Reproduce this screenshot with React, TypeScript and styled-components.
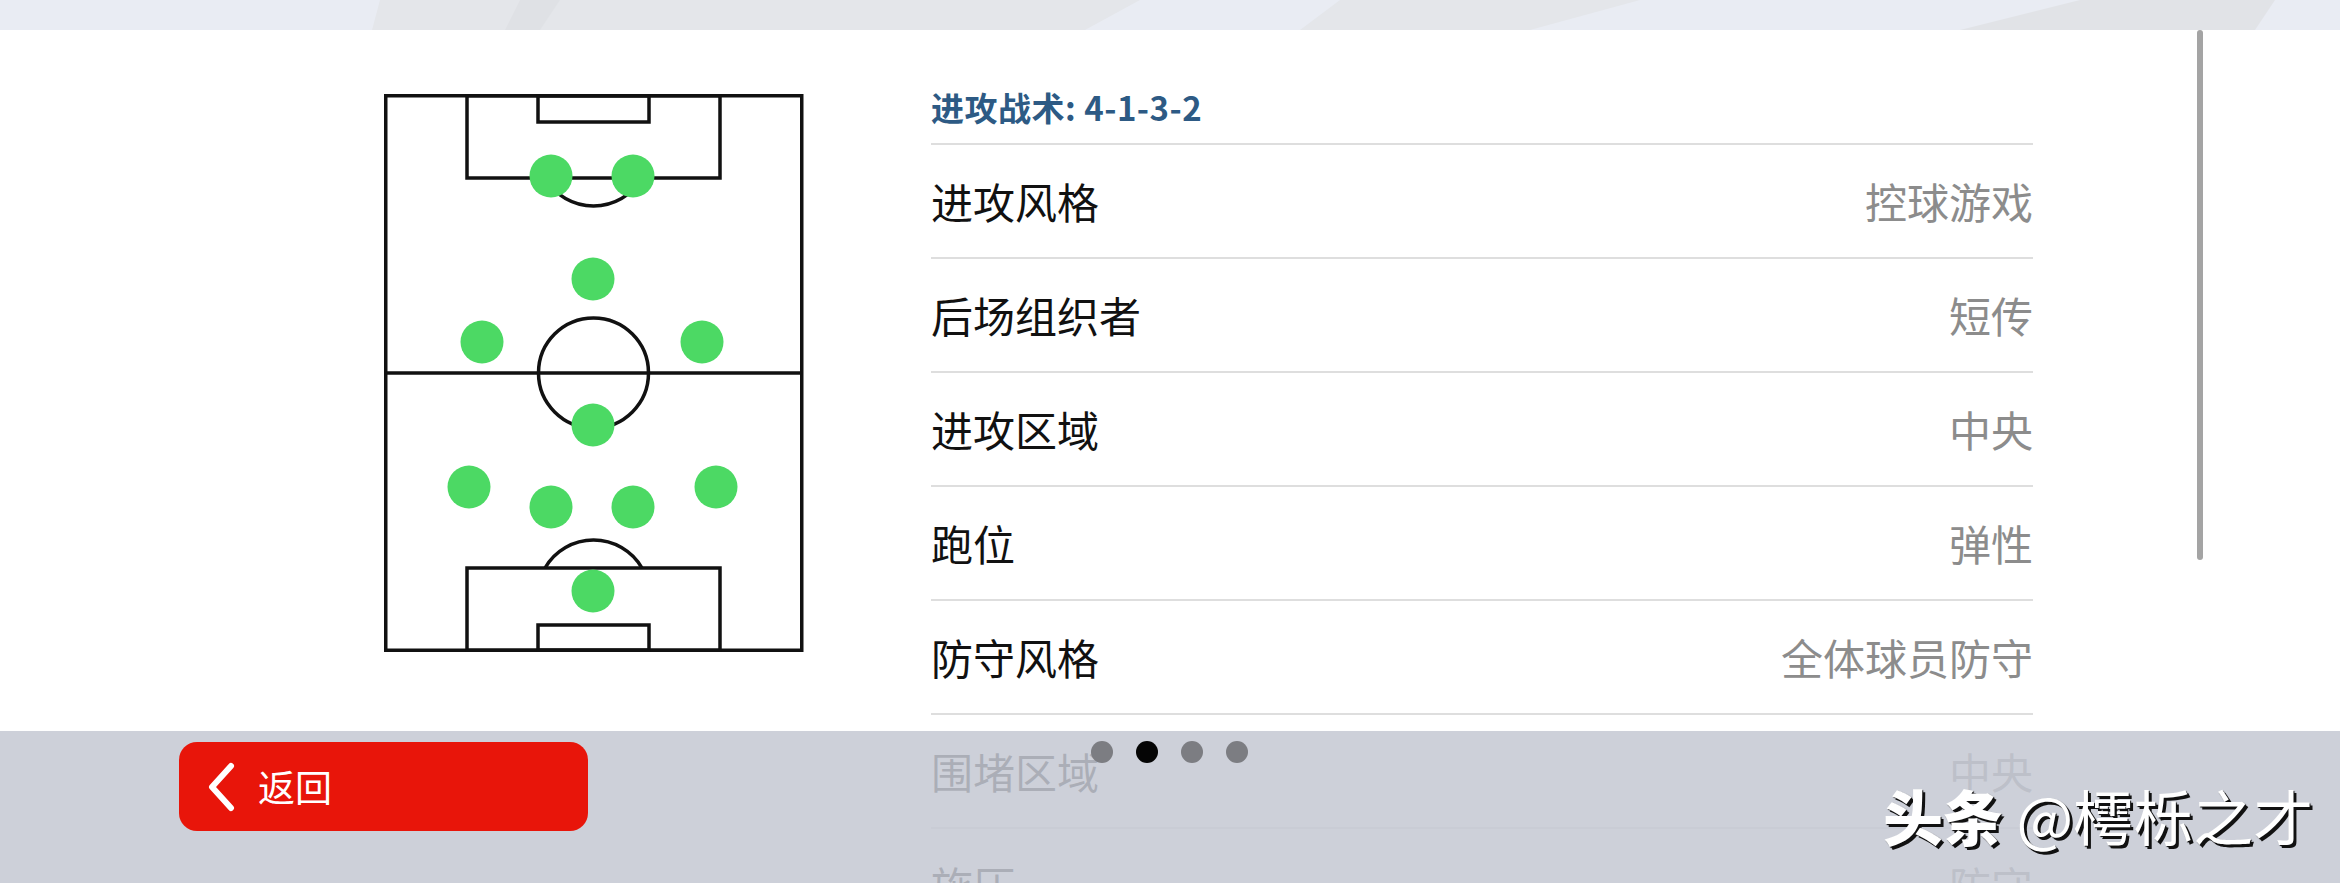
import React, { FC } from 'react';
import styled, { createGlobalStyle } from 'styled-components';

interface TacticRow {
  label: string;
  value: string;
}

const rows: TacticRow[] = [
  { label: '进攻风格', value: '控球游戏' },
  { label: '后场组织者', value: '短传' },
  { label: '进攻区域', value: '中央' },
  { label: '跑位', value: '弹性' },
  { label: '防守风格', value: '全体球员防守' },
  { label: '围堵区域', value: '中央' },
  { label: '施压', value: '防守' },
];

// pitch-local coordinates (pitch svg starts at 384,94)
const players: [number, number][] = [
  [167, 82],
  [249, 82],
  [209, 185],
  [98, 248],
  [318, 248],
  [209, 331],
  [85, 393],
  [167, 413],
  [249, 413],
  [332, 393],
  [209, 497],
];

const GlobalStyle = createGlobalStyle`
  html, body {
    margin: 0;
    padding: 0;
  }
  body {
    width: 2340px;
    height: 883px;
    overflow: hidden;
    background: #fff;
    font-family: "Noto Sans CJK SC", "Noto Sans", sans-serif;
  }
`;

const Screen = styled.div`
  position: relative;
  width: 2340px;
  height: 883px;
  display: flex;
  flex-direction: column;
  overflow: hidden;
  background: #fff;
`;

const TopStrip = styled.div`
  flex: none;
  height: 30px;
  background: #e9ecf3;

  svg {
    display: block;
  }
`;

const Content = styled.div`
  flex: 1;
  display: flex;
  align-items: flex-start;
  padding-left: 384px;
  background: #fff;
  overflow: hidden;
`;

const Pitch = styled.svg`
  flex: none;
  margin-top: 64px;
`;

const ListCol = styled.div`
  flex: none;
  width: 1102px;
  margin-left: 127px;
  padding-top: 57px;
`;

const TacticHeader = styled.div`
  font-size: 33px;
  font-weight: 700;
  line-height: 41px;
  letter-spacing: 0.5px;
  color: #2d5a84;
  padding-bottom: 15px;
  border-bottom: 2px solid #dedede;
`;

const Row = styled.div`
  display: flex;
  justify-content: space-between;
  align-items: center;
  height: 112px;
  border-bottom: 2px solid #dedede;
  font-size: 42px;
  line-height: 50px;
`;

const Label = styled.span`
  color: #111;
`;

const Value = styled.span`
  color: #8c8c8c;
`;

const ScrollThumb = styled.div`
  flex: none;
  width: 6px;
  height: 530px;
  margin-left: 164px;
  border-radius: 3px;
  background: #a4a4a4;
`;

const BottomBar = styled.div`
  position: absolute;
  left: 0;
  right: 0;
  bottom: 0;
  height: 152px;
  box-sizing: border-box;
  padding: 11px 0 0 179px;
  display: flex;
  align-items: flex-start;
  background: rgba(197, 200, 211, 0.86);
`;

const BackButton = styled.button`
  flex: none;
  width: 409px;
  height: 89px;
  border: none;
  border-radius: 18px;
  background: #e8150a;
  display: flex;
  align-items: center;
  gap: 22px;
  padding: 0 0 0 27px;
  color: #fff;
  font-family: inherit;
  font-size: 37px;
  line-height: 1;
`;

const Dots = styled.div`
  display: flex;
  gap: 23px;
  margin: -1px 0 0 503px;
`;

const Dot = styled.span<{ $active?: boolean }>`
  width: 22px;
  height: 22px;
  border-radius: 50%;
  background: ${(p) => (p.$active ? '#050505' : '#7c7d82')};
`;

const Watermark = styled.div`
  position: absolute;
  left: 1883px;
  top: 50px;
  font-size: 60px;
  line-height: 68px;
  color: #fff;
  white-space: nowrap;
  text-shadow: 3px 3px 0 #111, 1px 1px 1px #000;

  b {
    font-weight: 900;
  }
`;

const StripArt: FC = () => (
  <svg width="2340" height="30" viewBox="0 0 2340 30">
    <polygon points="380,0 1140,0 1085,30 372,30" fill="#e4e6ea" />
    <polygon points="520,0 560,0 540,30 505,30" fill="#dfe1e5" />
    <polygon points="1340,0 1640,0 1530,30 1300,30" fill="#e4e6ea" />
    <polygon points="2080,0 2275,0 2255,30 1960,30" fill="#e1e3e7" />
  </svg>
);

const PitchDrawing: FC = () => (
  <Pitch width="420" height="558" viewBox="0 0 420 558">
    <g fill="none" stroke="#111" strokeWidth="3.5">
      <rect x="1.75" y="1.75" width="416" height="554.5" />
      <line x1="1.75" y1="279" x2="417.75" y2="279" />
      <circle cx="209.5" cy="279" r="55" />
      <rect x="83" y="1.75" width="253" height="82.25" />
      <rect x="154" y="1.75" width="111" height="26.25" />
      <path d="M161 84 A56 56 0 0 0 258 84" />
      <rect x="83" y="474" width="253" height="82.25" />
      <rect x="154" y="531" width="111" height="25.25" />
      <path d="M161 474 A56 56 0 0 1 258 474" />
    </g>
    {players.map(([cx, cy], i) => (
      <circle key={i} cx={cx} cy={cy} r="21.5" fill="#4cd964" />
    ))}
  </Pitch>
);

const App: FC = () => (
  <Screen>
    <GlobalStyle />
    <TopStrip>
      <StripArt />
    </TopStrip>
    <Content>
      <PitchDrawing />
      <ListCol>
        <TacticHeader>进攻战术: 4-1-3-2</TacticHeader>
        {rows.map((r) => (
          <Row key={r.label}>
            <Label>{r.label}</Label>
            <Value>{r.value}</Value>
          </Row>
        ))}
      </ListCol>
      <ScrollThumb />
    </Content>
    <BottomBar>
      <BackButton type="button">
        <svg width="30" height="50" viewBox="0 0 30 50">
          <path d="M25 4 L6 25 L25 46" fill="none" stroke="#fff" strokeWidth="6" strokeLinecap="round" strokeLinejoin="round" />
        </svg>
        <span>返回</span>
      </BackButton>
      <Dots>
        <Dot />
        <Dot $active />
        <Dot />
        <Dot />
      </Dots>
      <Watermark>
        <b>头条</b> @樗栎之才
      </Watermark>
    </BottomBar>
  </Screen>
);

export default App;
